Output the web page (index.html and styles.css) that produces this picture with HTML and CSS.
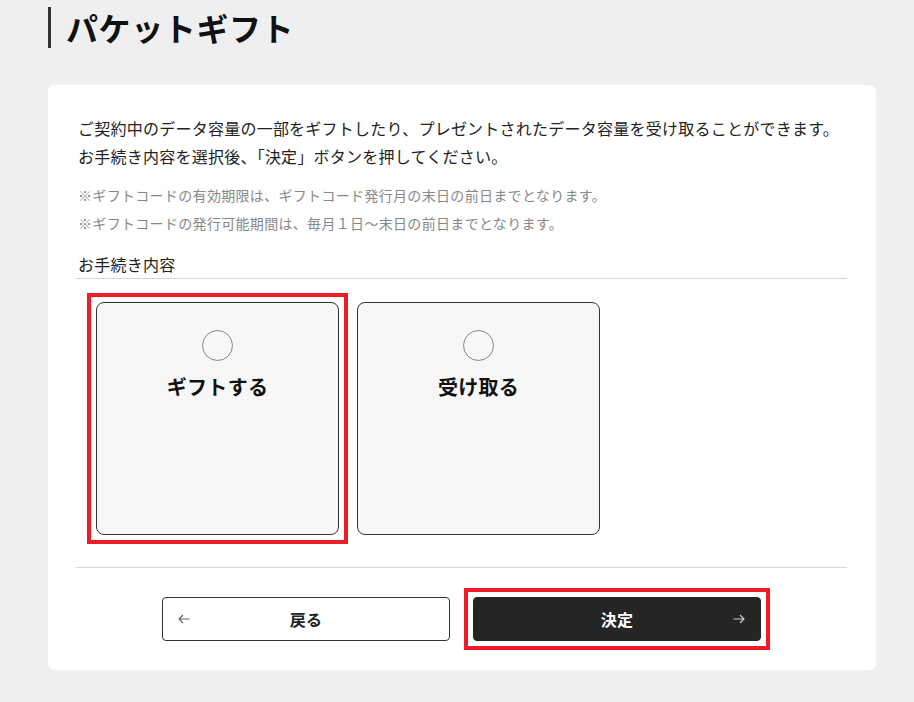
FILE: index.html
```html
<!DOCTYPE html>
<html lang="ja">
<head>
<meta charset="utf-8">
<title>パケットギフト</title>
<link rel="stylesheet" href="styles.css">
</head>
<body>
<div class="page">
  <h1 class="page-title">パケットギフト</h1>

  <section class="panel">
    <p class="lead">ご契約中のデータ容量の一部をギフトしたり、プレゼントされたデータ容量を受け取ることができます。<br>お手続き内容を選択後、「決定」ボタンを押してください。</p>

    <ul class="notes">
      <li>※ギフトコードの有効期限は、ギフトコード発行月の末日の前日までとなります。</li>
      <li>※ギフトコードの発行可能期間は、毎月１日〜末日の前日までとなります。</li>
    </ul>

    <h2 class="field-label">お手続き内容</h2>

    <div class="choices">
      <label class="choice is-focused">
        <span class="choice-radio"></span>
        <span class="choice-text">ギフトする</span>
      </label>
      <label class="choice">
        <span class="choice-radio"></span>
        <span class="choice-text">受け取る</span>
      </label>
    </div>

    <div class="actions">
      <button class="btn btn-back" type="button">
        <svg class="btn-arrow btn-arrow-left" width="12" height="10" viewBox="0 0 12 10" fill="none" stroke="currentColor" stroke-width="1.2">
          <path d="M11.5 5H1M5 1L1 5l4 4"/>
        </svg>
        <span>戻る</span>
      </button>
      <button class="btn btn-submit is-focused" type="button">
        <span>決定</span>
        <svg class="btn-arrow btn-arrow-right" width="12" height="10" viewBox="0 0 12 10" fill="none" stroke="currentColor" stroke-width="1.2">
          <path d="M0.5 5H11M7 1l4 4-4 4"/>
        </svg>
      </button>
    </div>
  </section>
</div>
</body>
</html>
```

FILE: styles.css
```css
* {
  box-sizing: border-box;
}

html, body {
  margin: 0;
  padding: 0;
}

body {
  background: #efefef;
  color: #222;
  font-family: "Noto Sans CJK JP", "Noto Sans", sans-serif;
}

.page {
  width: 828px;
  margin-left: 48px;
  padding-top: 7px;
}

.page-title {
  margin: 0;
  border-left: 3px solid #333;
  padding-left: 15px;
  font-size: 32px;
  font-weight: 700;
  line-height: 41px;
  letter-spacing: 0.6px;
  color: #111;
}

.panel {
  margin-top: 37px;
  background: #fff;
  border-radius: 6px;
  padding: 29px 29px 29px 28px;
}

.lead {
  margin: 0;
  padding-left: 2px;
  font-size: 16px;
  line-height: 28px;
  letter-spacing: 0.24px;
  color: #222;
}

.notes {
  list-style: none;
  margin: 11px 0 0;
  padding: 0 0 0 2px;
  font-size: 14px;
  line-height: 28px;
  letter-spacing: 0.32px;
  color: #888;
}

.field-label {
  margin: 13px 0 0;
  padding-left: 2px;
  font-size: 16px;
  font-weight: 400;
  line-height: 28px;
  letter-spacing: 0.24px;
  color: #222;
  border-bottom: 1px solid #d6d6d6;
}

.choices {
  display: flex;
  gap: 18px;
  padding-left: 20px;
  margin-top: 23px;
}

.choice {
  position: relative;
  width: 243px;
  height: 233px;
  border: 1px solid #333;
  border-radius: 8px;
  background: #f7f7f7;
  display: flex;
  flex-direction: column;
  align-items: center;
  padding-top: 27px;
  cursor: pointer;
}

.choice-radio {
  width: 31px;
  height: 31px;
  border: 1px solid #888;
  border-radius: 50%;
  background: #f7f7f7;
}

.choice-text {
  margin-top: 11px;
  font-size: 20px;
  font-weight: 700;
  line-height: 30px;
  letter-spacing: 0.3px;
  color: #111;
}

/* square focus frame drawn around the control, ignoring its rounded corners */
.is-focused::after {
  content: "";
  position: absolute;
  top: -10px;
  right: -10px;
  bottom: -10px;
  left: -10px;
  border: 4px solid #ee1c25;
  pointer-events: none;
}

.actions {
  margin-top: 32px;
  border-top: 1px solid #d6d6d6;
  padding-top: 29px;
  display: flex;
  justify-content: center;
  gap: 23px;
}

.btn {
  position: relative;
  width: 288px;
  height: 44px;
  border-radius: 4px;
  font-family: inherit;
  font-size: 16px;
  font-weight: 700;
  letter-spacing: 0.24px;
  display: flex;
  align-items: center;
  justify-content: center;
  padding: 0;
  cursor: pointer;
}

.btn-back {
  background: #fff;
  border: 1px solid #333;
  color: #222;
}

.btn-submit {
  background: #252525;
  border: 1px solid #252525;
  color: #fff;
}

.btn-arrow {
  position: absolute;
  top: 50%;
  margin-top: -5px;
}

.btn-arrow-left {
  left: 15px;
  color: #666;
}

.btn-arrow-right {
  right: 15px;
  color: #ccc;
}
```
